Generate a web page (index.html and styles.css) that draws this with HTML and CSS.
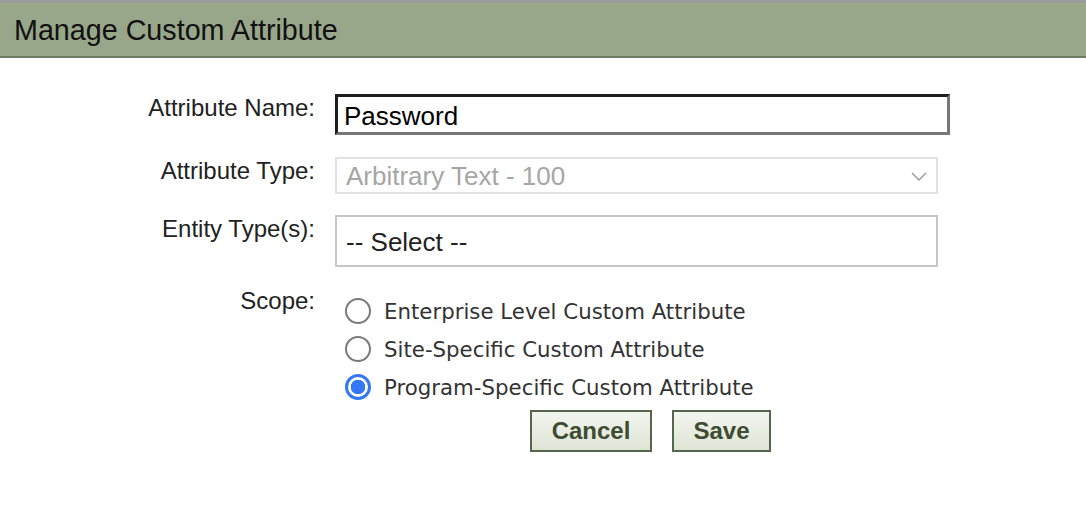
FILE: index.html
```html
<!DOCTYPE html>
<html lang="en">
<head>
    <meta charset="UTF-8">
    <title>Manage Custom Attribute</title>
    <link rel="stylesheet" href="styles.css">
</head>
<body>

<div class="panel-header">
    <h1>Manage Custom Attribute</h1>
</div>

<form class="attr-form">
    <!-- Name -->
    <div class="form-row">
        <label class="form-label" for="attrName">Attribute Name:</label>
        <div class="form-field">
            <input type="text" id="attrName" class="text-input" value="Password">
        </div>
    </div>

    <!-- Type (locked once created) -->
    <div class="form-row row-type">
        <label class="form-label">Attribute Type:</label>
        <div class="form-field">
            <div class="select-box select-disabled">
                <span>Arbitrary Text - 100</span>
                <svg class="chevron" width="16" height="10" viewBox="0 0 16 10">
                    <polyline points="1,1 8,8 15,1" fill="none" stroke="#9a9a9a" stroke-width="1.4"/>
                </svg>
            </div>
        </div>
    </div>

    <!-- Entity types -->
    <div class="form-row row-entity">
        <label class="form-label">Entity Type(s):</label>
        <div class="form-field">
            <div class="select-box select-multi">-- Select --</div>
        </div>
    </div>

    <!-- Scope -->
    <div class="form-row row-scope">
        <label class="form-label">Scope:</label>
        <div class="form-field">
            <div class="radio-list">
                <div class="radio-item"><span class="radio"></span>Enterprise Level Custom Attribute</div>
                <div class="radio-item"><span class="radio"></span>Site-Specific Custom Attribute</div>
                <div class="radio-item"><span class="radio checked"></span>Program-Specific Custom Attribute</div>
            </div>
            <div class="button-row">
                <button type="button" class="btn btn-cancel">Cancel</button>
                <button type="submit" class="btn btn-save">Save</button>
            </div>
        </div>
    </div>
</form>

</body>
</html>
```

FILE: styles.css
```css
body {
    margin: 0;
    font-family: "Liberation Sans", Arial, sans-serif;
    background: #fff;
    color: #222;
}

.panel-header {
    border-top: 3px solid #9c9c9c;
    border-bottom: 2px solid #6e7c62;
    background: #98a68a;
    height: 58px;
    box-sizing: border-box;
    padding: 11px 14px 0;
}
.panel-header h1 {
    margin: 0;
    font-size: 28.7px;
    font-weight: normal;
    line-height: 32px;
    color: #111;
}

.attr-form {
    padding-top: 36px;
}
.form-row {
    display: flex;
    align-items: flex-start;
}
.form-label {
    width: 315px;
    text-align: right;
    font-size: 24px;
    line-height: 28px;
    padding-top: 0;
    color: #222;
}
.form-field {
    margin-left: 20px;
}

.text-input {
    display: block;
    width: 615px;
    height: 41px;
    box-sizing: border-box;
    margin: 0;
    padding: 3px 6px 0;
    border-style: solid;
    border-width: 3px;
    border-color: #1e1e1e #777 #777 #1e1e1e;
    font-family: "Liberation Sans", Arial, sans-serif;
    font-size: 26px;
    color: #000;
    outline: none;
}

.row-type {
    margin-top: 22px;
}
.row-entity {
    margin-top: 21px;
}
.row-scope {
    margin-top: 25px;
}
.row-scope .form-label {
    margin-top: -5px;
}

.select-box {
    position: relative;
    width: 603px;
    box-sizing: border-box;
    font-size: 26px;
    padding-left: 9px;
}
.select-disabled {
    height: 37px;
    line-height: 35px;
    border: 2px solid #e2e2e2;
    color: #a6a6a6;
}
.select-disabled .chevron {
    position: absolute;
    right: 9px;
    top: 13px;
}
.select-multi {
    height: 52px;
    line-height: 50px;
    border: 2px solid #c6c6c6;
    color: #222;
}

.radio-list {
    font-family: "DejaVu Sans", Verdana, sans-serif;
    font-size: 21.3px;
    color: #333;
}
.radio-item {
    display: flex;
    align-items: center;
    height: 38px;
}
.radio {
    flex: none;
    width: 26px;
    height: 26px;
    box-sizing: border-box;
    border: 2px solid #7a7a7a;
    border-radius: 50%;
    background: #fff;
    margin: 0 13px 0 10px;
}
.radio.checked {
    border: 3px solid #3478f6;
    background: radial-gradient(circle, #3478f6 0 7px, #fff 7.5px);
}

.button-row {
    display: flex;
    gap: 20px;
    margin: 4px 0 0 195px;
}
.btn {
    height: 42px;
    box-sizing: border-box;
    border: 2px solid #56664a;
    background: linear-gradient(#f3f5f0, #dde5d4);
    font-family: "Liberation Sans", Arial, sans-serif;
    font-weight: bold;
    font-size: 24px;
    color: #3e4d31;
    padding: 0;
    cursor: pointer;
}
.btn-cancel {
    width: 122px;
}
.btn-save {
    width: 99px;
}
```
